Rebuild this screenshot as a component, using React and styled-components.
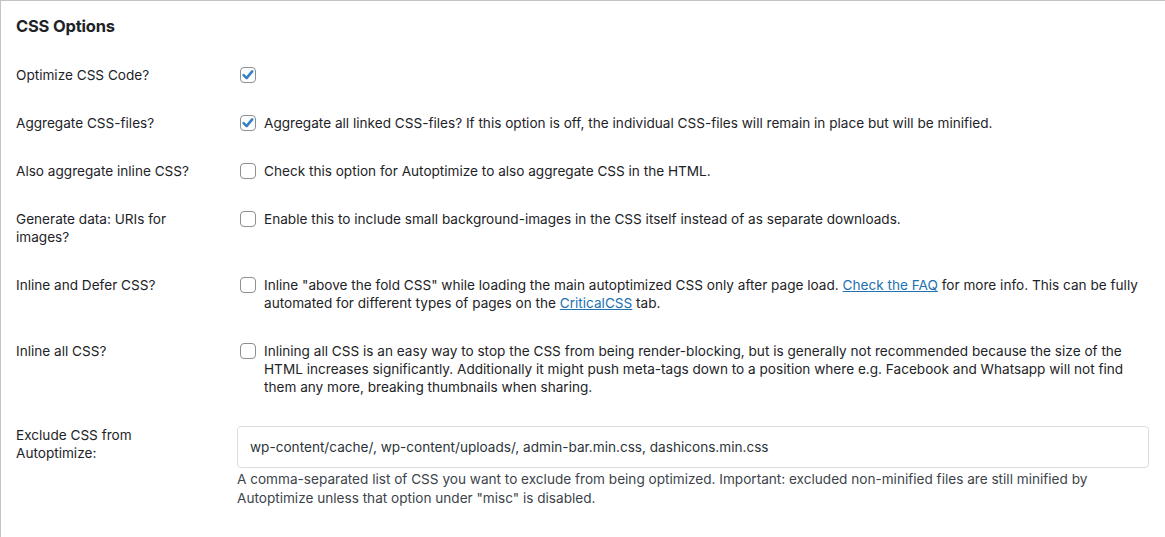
import React from "react";
import styled, { createGlobalStyle } from "styled-components";

const GlobalStyle = createGlobalStyle`
  html, body {
    margin: 0;
    padding: 0;
    background: #ffffff;
  }
  body {
    font-family: Inter, "Open Sans", "Liberation Sans", sans-serif;
    color: #1d2327;
  }
`;

const Panel = styled.div`
  border-top: 1px solid #c3c4c7;
  border-left: 1px solid #c3c4c7;
  background: #fff;
  padding: 0 16px 30px 15px;
  min-height: 536px;
  box-sizing: border-box;
`;

const Heading = styled.h2`
  margin: 0;
  padding-top: 14px;
  height: 36px;
  font-size: 16.5px;
  font-weight: 700;
  line-height: 22px;
  letter-spacing: -0.2px;
`;

const Table = styled.div`
  display: grid;
  grid-template-columns: 221px 1fr;
`;

const Label = styled.div`
  padding: 15px 0;
  font-size: 13.6px;
  line-height: 18px;
`;

const Cell = styled.div`
  padding: 15px 0;
  font-size: 13.6px;
  line-height: 18px;
  display: flex;
  align-items: flex-start;
  gap: 8px;
`;

const FieldCell = styled.div`
  padding: 15px 0 0;
  font-size: 13.6px;
  line-height: 18.5px;
`;

const Box = styled.span`
  flex: none;
  width: 16px;
  height: 16px;
  margin: 1px 0 0 3px;
  box-sizing: border-box;
  border: 1px solid #8c8f94;
  border-radius: 4px;
  background: #fff;
  display: flex;
  align-items: center;
  justify-content: center;
`;

const Text = styled.span`
  display: block;
`;

const Link = styled.a`
  color: #2271b1;
  text-decoration: underline;
`;

const Input = styled.div`
  height: 42px;
  box-sizing: border-box;
  border: 1px solid #dcdcde;
  border-radius: 4px;
  padding: 0 12px;
  display: flex;
  align-items: center;
  font-size: 13.6px;
  color: #2c3338;
`;

const Description = styled.p`
  margin: 2px 0 0;
  color: #3c434a;
`;

const Checkbox = ({ checked }) => (
  <Box>
    {checked && (
      <svg width="14" height="14" viewBox="0 0 14 14">
        <path
          d="M2.6 7.2 L5.6 10.2 L11.2 3.4"
          fill="none"
          stroke="#3582c4"
          strokeWidth="2.6"
          strokeLinecap="round"
          strokeLinejoin="round"
        />
      </svg>
    )}
  </Box>
);

const Row = ({ label, checked, children }) => (
  <>
    <Label>{label}</Label>
    <Cell>
      <Checkbox checked={checked} />
      {children && <Text>{children}</Text>}
    </Cell>
  </>
);

export default function App() {
  return (
    <>
      <GlobalStyle />
      <Panel>
        <Heading>CSS Options</Heading>
        <Table>
          <Row label="Optimize CSS Code?" checked />
          <Row label="Aggregate CSS-files?" checked>
            Aggregate all linked CSS-files? If this option is off, the individual
            CSS-files will remain in place but will be minified.
          </Row>
          <Row label="Also aggregate inline CSS?">
            Check this option for Autoptimize to also aggregate CSS in the HTML.
          </Row>
          <Row
            label={
              <>
                Generate data: URIs for
                <br />
                images?
              </>
            }
          >
            Enable this to include small background-images in the CSS itself
            instead of as separate downloads.
          </Row>
          <Row label="Inline and Defer CSS?">
            Inline "above the fold CSS" while loading the main autoptimized CSS
            only after page load. <Link href="#">Check the FAQ</Link> for more
            info. This can be fully
            <br />
            automated for different types of pages on the{" "}
            <Link href="#">CriticalCSS</Link> tab.
          </Row>
          <Row label="Inline all CSS?">
            Inlining all CSS is an easy way to stop the CSS from being
            render-blocking, but is generally not recommended because the size of
            the
            <br />
            HTML increases significantly. Additionally it might push meta-tags
            down to a position where e.g. Facebook and Whatsapp will not find
            <br />
            them any more, breaking thumbnails when sharing.
          </Row>
          <Label>
            Exclude CSS from
            <br />
            Autoptimize:
          </Label>
          <FieldCell>
            <Input>
              wp-content/cache/, wp-content/uploads/, admin-bar.min.css,
              dashicons.min.css
            </Input>
            <Description>
              A comma-separated list of CSS you want to exclude from being
              optimized. Important: excluded non-minified files are still
              minified by
              <br />
              Autoptimize unless that option under "misc" is disabled.
            </Description>
          </FieldCell>
        </Table>
      </Panel>
    </>
  );
}
